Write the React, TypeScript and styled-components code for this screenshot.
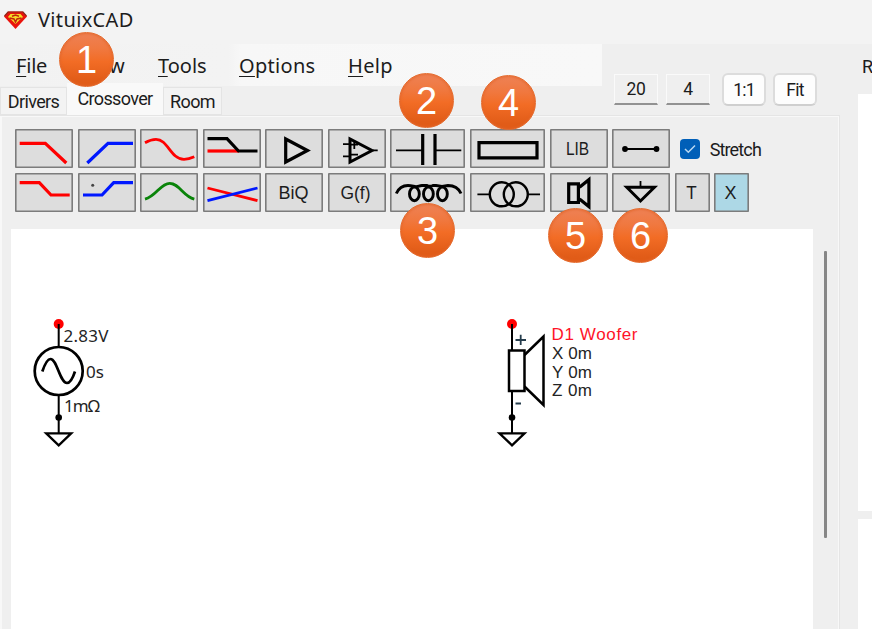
import React from "react";
import styled, { createGlobalStyle } from "styled-components";

const Global = createGlobalStyle`
  * { box-sizing: border-box; }
  body { margin: 0; background: #efefef; overflow: hidden; }
`;

const uiFont = `Roboto, "Liberation Sans", sans-serif`;
const menuFont = `"Noto Sans", "Open Sans", sans-serif`;

const Window = styled.div`
  position: relative;
  width: 872px;
  height: 629px;
  display: flex;
  flex-direction: column;
  background: #efefef;
  color: #1c1c1c;
  overflow: hidden;
  font-family: ${uiFont};
`;

const TitleBar = styled.header`
  height: 44px;
  flex: none;
  display: flex;
  align-items: center;
  gap: 10px;
  padding: 0 0 4px 3px;
  background: #f3f3f3;
`;

const Title = styled.span`
  font: 20px/28px ${menuFont};
  letter-spacing: 0.35px;
`;

const Body = styled.div`
  flex: 1;
  display: flex;
`;

const Main = styled.main`
  width: 858px;
  display: flex;
  flex-direction: column;
`;

const Header = styled.div`
  height: 71px;
  display: flex;
`;

const HeaderLeft = styled.div`
  width: 602px;
  display: flex;
  flex-direction: column;
`;

const MenuBar = styled.nav`
  height: 42px;
  flex: none;
  display: flex;
  align-items: center;
  padding: 1px 0 0 16px;
  background: linear-gradient(90deg, #f2f2f2, #f3f3f3 38%, #f7f7f7 40%, #f8f8f8);
`;

const MenuItem = styled.span<{ $w: number; $ls: number }>`
  width: ${(p) => p.$w}px;
  font: 20px/28px ${menuFont};
  letter-spacing: ${(p) => p.$ls}px;
  white-space: nowrap;
  u {
    text-underline-offset: 3px;
    text-decoration-thickness: 1px;
  }
`;

const Tabs = styled.div`
  height: 29px;
  display: flex;
  align-items: flex-end;
`;

const Tab = styled.div<{ $w: number; $active?: boolean }>`
  width: ${(p) => p.$w}px;
  height: ${(p) => (p.$active ? 32 : 28)}px;
  flex: none;
  border: ${(p) => (p.$active ? "0" : "1px solid #e4e4e4")};
  background: ${(p) => (p.$active ? "#f9f9f9" : "#f3f3f3")};
  text-align: center;
  font-size: 18px;
  line-height: ${(p) => (p.$active ? 31 : 28)}px;
  letter-spacing: -0.65px;
`;

const ZoomControls = styled.div`
  display: flex;
  align-items: flex-start;
  padding: 29px 0 0 12px;
`;

const FlatButton = styled.div`
  width: 44px;
  height: 31px;
  margin: 1px 8px 0 0;
  border: 1px solid #fafafa;
  border-bottom: 2px solid #929292;
  text-align: center;
  font-size: 17.5px;
  line-height: 28px;
  letter-spacing: -0.4px;
`;

const RoundButton = styled.div`
  width: 44px;
  height: 33px;
  margin: 0 0 0 4px;
  & + & { margin-left: 7px; }
  border: 2px solid #dcdcdc;
  border-bottom-color: #cfcfcf;
  border-radius: 6px;
  background: #fdfdfd;
  text-align: center;
  font-size: 17.5px;
  line-height: 31px;
  letter-spacing: -0.8px;
`;

const Panel = styled.section`
  width: 840px;
  flex: 1;
  display: flex;
  flex-direction: column;
  border: solid #e5e5e5;
  border-width: 1px 1px 0 0;
  box-shadow: inset 2px 1px #f8f8f8, inset -1px 0 #f8f8f8;
`;

const Toolbar = styled.div`
  height: 113px;
  flex: none;
  display: flex;
  flex-direction: column;
  gap: 4.6px;
  padding: 13.4px 0 0 15.4px;
`;

const ToolRow = styled.div`
  display: flex;
  height: 39px;
  gap: 4.52px;
`;

const ToolButton = styled.div<{ $w: number; $on?: boolean }>`
  width: ${(p) => p.$w}px;
  height: 39px;
  flex: none;
  display: flex;
  align-items: center;
  justify-content: center;
  border-radius: 1px;
  background: ${(p) => (p.$on ? "#add8e6" : "#dddddd")};
  box-shadow: inset 0 0 0 1.6px #7c7c7c;
  font: 18px "Liberation Sans", Arial, sans-serif;
  padding: 2px 2px 0 0;
`;

const ToolText = styled.span<{ $sx: number }>`
  transform: scaleX(${(p) => p.$sx});
`;

const Icon = styled.svg`
  display: block;
  flex: none;
  margin: -2px -2px 0 0;
  fill: none;
  stroke: #000;
  stroke-width: 3.2;
`;

const StretchLabel = styled.label`
  display: flex;
  align-items: center;
  gap: 9.5px;
  padding: 1px 0 0 5.6px;
  font-size: 18px;
  letter-spacing: -0.85px;
`;

const CheckBox = styled.span`
  width: 20px;
  height: 20px;
  border-radius: 4px;
  background: #005fb8;
  display: flex;
  align-items: center;
  justify-content: center;
`;

const Workspace = styled.div`
  flex: 1;
  display: flex;
`;

const Canvas = styled.div`
  width: 802px;
  margin-left: 11px;
  background: #fff;
`;

const ScrollThumb = styled.div`
  width: 3px;
  height: 287px;
  margin: 22px 0 0 11px;
  border-radius: 1px;
  background: #868686;
`;

const Side = styled.aside`
  width: 14px;
  display: flex;
  flex-direction: column;
  overflow: hidden;
`;

const SideTitle = styled.div`
  height: 50px;
  padding: 12px 0 0 4px;
  font-size: 18px;
  line-height: 21px;
`;

const SidePane = styled.div<{ $h: number }>`
  height: ${(p) => p.$h}px;
  flex: none;
  margin-bottom: 8px;
  background: #fff;
`;

const Badge = styled.div<{ $x: number; $y: number }>`
  position: absolute;
  left: ${(p) => p.$x}px;
  top: ${(p) => p.$y}px;
  width: 55px;
  height: 55px;
  border-radius: 50%;
  border: 1px solid #e56a2c;
  background: linear-gradient(#ee8155, #f0783f 30%, #f26c25 54%, #e15c18 90%);
  box-shadow: inset 0 0 2px 1px rgba(226, 100, 40, 0.6);
  color: #fff;
  text-align: center;
  font: 38px/55px "Liberation Sans", Arial, sans-serif;
`;

const badges: [string, number, number][] = [
  ["1", 59, 32], ["2", 399, 73], ["3", 400, 203], ["4", 481, 75], ["5", 548, 208], ["6", 613, 208],
];

type Tool = { w?: number; label?: string; sx?: number; on?: boolean; art?: React.ReactNode };

const topTools: Tool[] = [
  { art: <path stroke="#f00" d="M4.7 14.3H30.3L51.3 34" /> },
  { art: <path stroke="#0018ff" d="M9.3 34L30 14.3H55" /> },
  { art: <path stroke="#f00" strokeWidth="2.8" d="M5 13.7C9 11.4 12 10.3 16 10.3C28 10.3 30.5 30.3 44 30.3C48 30.3 51 29.2 54.3 27.7" /> },
  { art: <><path stroke="#f00" d="M4.5 22H36" /><path d="M4.5 9.7H24L35.5 22H54.5" /></> },
  { art: <path d="M20.7 10V33L42.5 21.5Z" /> },
  { art: <><path strokeWidth="3" d="M22 10V33L44 21.5Z" /><path strokeWidth="1.8" d="M15 15.2H21M15 27.3H21M45 21.3H49.7M22 15.7H30M26.3 12V20M22 25.6H30" /></> },
  { w: 75, art: <><path strokeWidth="1.8" d="M6 21.3H32.7M45 21.3H71.3" /><path d="M32.7 5V36M45 5V36" /></> },
  { w: 75, art: <path strokeWidth="3.2" d="M9 13.6H67V28.8H9Z" /> },
  { label: "LIB", sx: 0.86 },
  { art: <><path strokeWidth="2" d="M13 20H44.5" /><circle cx="13" cy="20" r="2.9" fill="#000" stroke="none" /><circle cx="44.5" cy="20" r="2.9" fill="#000" stroke="none" /></> },
];

const bottomTools: Tool[] = [
  { art: <path stroke="#f00" d="M4.7 9.7H24.3L36 22H54.7" /> },
  { art: <><path stroke="#0018ff" d="M5 22H24L35.7 9.7H55" /><circle cx="14.7" cy="12.3" r="1.5" fill="#444" stroke="none" /></> },
  { art: <path stroke="#0a840a" strokeWidth="2.8" d="M5 26.2C16.5 23 20.5 10.3 29.7 10.3C39 10.3 43 23 54.3 26.2" /> },
  { art: <><path stroke="#f00" strokeWidth="2.8" d="M4.5 15L54.5 27.7" /><path stroke="#0018ff" strokeWidth="2.8" d="M4.5 27.7L54.5 15" /></> },
  { label: "BiQ", sx: 1 },
  { label: "G(f)", sx: 0.97 },
  { w: 75, art: <><path strokeWidth="2.9" d="M6.3 20.5C9 14.5 13.5 12.5 18 12.5C22 12.5 24 13.6 26 13.6C29 13.6 29 12.5 32 12.5H37C39 13.5 41 13.5 43 12.5H46L52 13.4L58 12.5C63.5 12.5 68.3 14.5 71 20.5" /><g strokeWidth="2.9"><ellipse cx="24.4" cy="20.9" rx="4.9" ry="6.8" /><ellipse cx="38.4" cy="20.9" rx="4.9" ry="6.8" /><ellipse cx="52.4" cy="20.9" rx="4.9" ry="6.8" /></g></> },
  { w: 75, art: <><g strokeWidth="2.4"><circle cx="31.8" cy="21.3" r="12" /><circle cx="45.8" cy="21.3" r="12" /></g><path strokeWidth="1.8" d="M7.4 21.3H19.4M58.4 21.3H70" /></> },
  { art: <><path d="M18.7 10.9H28.4V29.5H18.7Z" /><path d="M29.5 14.3L38.9 6.7V33.6L29.5 26" /></> },
  { art: <><path strokeWidth="3" d="M14.8 14.3H42.4L28.5 28Z" /><path strokeWidth="1.8" d="M28.5 8V13" /></> },
  { w: 35, label: "T", sx: 0.95 },
  { w: 35, label: "X", sx: 1, on: true },
];

function Tools({ items }: { items: Tool[] }) {
  return (
    <>
      {items.map(({ w = 58, label, sx = 1, on, art }, i) => (
        <ToolButton key={i} $w={w} $on={on}>
          {art ? (
            <Icon width={w} height="39" viewBox={`0 0 ${w} 39`}>{art}</Icon>
          ) : (
            <ToolText $sx={sx}>{label}</ToolText>
          )}
        </ToolButton>
      ))}
    </>
  );
}

const Drawing = styled.svg`
  display: block;
  fill: none;
  stroke: #000;
`;

const SourceText = styled.text`
  fill: #242424;
  stroke: none;
  font-size: 17px;
  font-family: "Noto Sans", sans-serif;
`;

const DriverText = styled.text<{ $name?: boolean }>`
  fill: ${(p) => (p.$name ? "#ff1428" : "#242424")};
  stroke: none;
  font-size: 17px;
  font-family: "Liberation Sans", sans-serif;
`;

function Terminals({ x, top, bottom }: { x: number; top: number; bottom: number }) {
  return (
    <g>
      <circle cx={x} cy="324" r="5" fill="#f00" stroke="none" />
      <path strokeWidth="2" d={`M${x} 324V${top}M${x} ${bottom}V433`} />
      <circle cx={x} cy="417.5" r="3.3" fill="#000" stroke="none" />
      <path strokeWidth="2.3" d={`M${x - 12.5} 433.3H${x + 12.5}L${x} 445.3Z`} />
    </g>
  );
}

function Schematic() {
  return (
    <Drawing width="802" height="400" viewBox="11 229 802 400">
      <Terminals x={58.7} top={347} bottom={395} />
      <circle cx="58.7" cy="371" r="24" strokeWidth="2.7" />
      <path strokeWidth="2.7" d="M42.3 371.5C44.5 365 47 359 50.5 359C57 359 60 383 67 383C70.5 383 73 377.5 75 371.5" />
      <SourceText x="63.5" y="342" textLength="45">2.83V</SourceText>
      <SourceText x="86" y="378" textLength="18">0s</SourceText>
      <SourceText x="64" y="412.3" textLength="36">1mΩ</SourceText>

      <Terminals x={512} top={350} bottom={391} />
      <path strokeWidth="2.5" d="M509 350.5H524.5V391H509Z" />
      <path strokeWidth="2.5" d="M524.5 355L543.5 336.5V405L524.5 386.5" />
      <path stroke="#253c4c" strokeWidth="1.8" d="M515.5 340H526M520.7 334.7V345M515.5 403.5H521" />
      <DriverText $name x="551.5" y="340" textLength="86">D1 Woofer</DriverText>
      <DriverText x="552" y="358.8" textLength="40">X 0m</DriverText>
      <DriverText x="552" y="377.6" textLength="40">Y 0m</DriverText>
      <DriverText x="552" y="396.4" textLength="40">Z 0m</DriverText>
    </Drawing>
  );
}

function Logo() {
  return (
    <svg width="25" height="20" viewBox="0 0 25 20">
      <path d="M5 1.5H20L24 6.5L12.5 19L1 6.5Z" fill="#ea130c" />
      <path d="M1.5 6L5 2H20L23.5 6" fill="none" stroke="#8c2a1c" strokeWidth="1.2" />
      <path d="M7.5 4H17.5L20 7L16 10.5L12.5 14L9 10.5L5 7Z" fill="#f5dc28" />
      <path d="M9 6.3L12.5 5L16 6.3M6.5 8L11 9L12.5 12L14 9L18.5 8" fill="none" stroke="#c3260c" strokeWidth="1.5" />
    </svg>
  );
}

export default function App() {
  return (
    <Window>
      <Global />
      <TitleBar>
        <Logo />
        <Title>VituixCAD</Title>
      </TitleBar>
      <Body>
        <Main>
          <Header>
            <HeaderLeft>
              <MenuBar>
                <MenuItem $w={65} $ls={-0.2}><u>F</u>ile</MenuItem>
                <MenuItem $w={77} $ls={0}><u>V</u>iew</MenuItem>
                <MenuItem $w={81} $ls={0}><u>T</u>ools</MenuItem>
                <MenuItem $w={109} $ls={0.3}><u>O</u>ptions</MenuItem>
                <MenuItem $w={60} $ls={0.3}><u>H</u>elp</MenuItem>
              </MenuBar>
              <Tabs>
                <Tab $w={67}>Drivers</Tab>
                <Tab $w={96} $active>Crossover</Tab>
                <Tab $w={59}>Room</Tab>
              </Tabs>
            </HeaderLeft>
            <ZoomControls>
              <FlatButton>20</FlatButton>
              <FlatButton>4</FlatButton>
              <RoundButton>1:1</RoundButton>
              <RoundButton>Fit</RoundButton>
            </ZoomControls>
          </Header>
          <Panel>
            <Toolbar>
              <ToolRow>
                <Tools items={topTools} />
                <StretchLabel>
                  <CheckBox>
                    <svg width="12" height="10" viewBox="0 0 12 10">
                      <path d="M1 5L4.3 8.2L11 1.5" fill="none" stroke="#b9d8f2" strokeWidth="1.5" />
                    </svg>
                  </CheckBox>
                  Stretch
                </StretchLabel>
              </ToolRow>
              <ToolRow>
                <Tools items={bottomTools} />
              </ToolRow>
            </Toolbar>
            <Workspace>
              <Canvas><Schematic /></Canvas>
              <ScrollThumb />
            </Workspace>
          </Panel>
        </Main>
        <Side>
          <SideTitle>R</SideTitle>
          <SidePane $h={417} />
          <SidePane $h={110} />
        </Side>
      </Body>
      {badges.map(([n, x, y]) => (
        <Badge key={n} $x={x} $y={y}>{n}</Badge>
      ))}
    </Window>
  );
}
